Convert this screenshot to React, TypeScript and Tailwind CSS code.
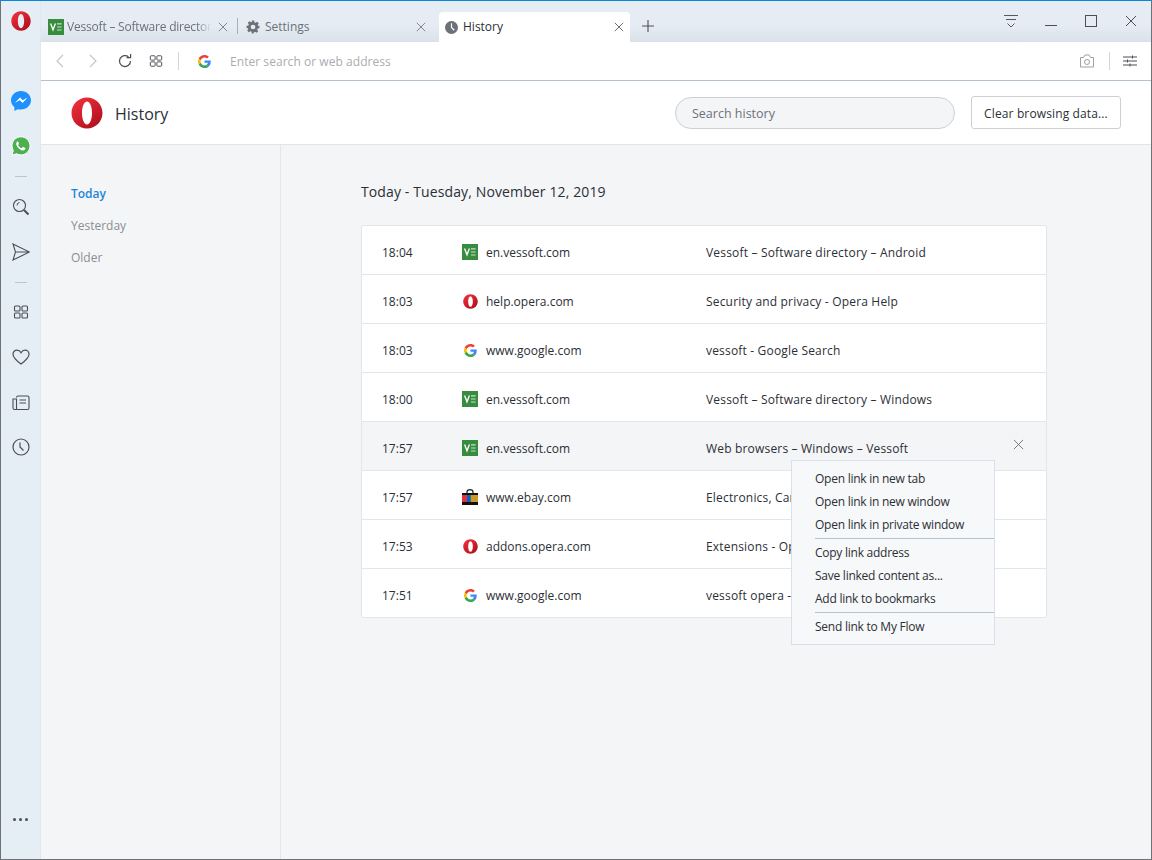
import React from "react";

const font = { fontFamily: '"Open Sans", "Noto Sans", sans-serif' };

function OperaLogo({ size, className = "" }: { size: number; className?: string }) {
  return (
    <svg width={size} height={size} viewBox="0 0 32 32" className={className}>
      <defs>
        <linearGradient id="opg" x1="0" y1="0" x2="0.8" y2="1">
          <stop offset="0" stopColor="#f5343f" />
          <stop offset="1" stopColor="#b00f1c" />
        </linearGradient>
      </defs>
      <path
        fillRule="evenodd"
        fill="url(#opg)"
        d="M16 0.500C7.400 0.500 0.500 7.400 0.500 16S7.400 31.500 16 31.500 31.500 24.600 31.500 16 24.600 0.500 16 0.500ZM16 4.600c3 0 5 5.200 5 11.400s-2 11.400-5 11.400S11 22.200 11 16 13 4.600 16 4.600Z"
      />
    </svg>
  );
}

function Ve({ className = "" }: { className?: string }) {
  return (
    <svg width="16" height="16" viewBox="0 0 16 16" className={className}>
      <rect width="16" height="16" fill="#368d3e" />
      <path d="M2.600 4.400 L5 10.800 L7.400 4.400" fill="none" stroke="#fff" strokeWidth="1.300" />
      <path d="M9 4.800H13.600M9 8H13.600M9 11H13.600" stroke="#c9dfcb" strokeWidth="1.200" />
    </svg>
  );
}

function GoogleG({ size = 14 }: { size?: number }) {
  return (
    <svg width={size} height={size} viewBox="0 0 48 48">
      <path fill="#EA4335" d="M24 9.500c3.500 0 6.700 1.200 9.200 3.600l6.900-6.900C35.900 2.400 30.500 0 24 0 14.600 0 6.500 5.400 2.600 13.200l8 6.200C12.400 13.700 17.700 9.500 24 9.500z" />
      <path fill="#4285F4" d="M46.900 24.500c0-1.600-.1-3.100-.4-4.500H24v9h12.900c-.6 3-2.200 5.500-4.700 7.200l7.700 6C44.400 37.800 46.900 31.700 46.900 24.500z" />
      <path fill="#FBBC05" d="M10.500 28.600c-.5-1.400-.8-3-.8-4.600s.3-3.200.8-4.600l-8-6.200C.9 16.500 0 20.100 0 24s.9 7.500 2.600 10.800l7.900-6.200z" />
      <path fill="#34A853" d="M24 48c6.500 0 11.900-2.100 15.900-5.800l-7.700-6c-2.200 1.400-4.900 2.300-8.200 2.300-6.300 0-11.600-4.200-13.500-9.900l-8 6.200C6.500 42.600 14.600 48 24 48z" />
    </svg>
  );
}

function Ebay() {
  return (
    <svg width="16" height="16" viewBox="0 0 16 16">
      <path d="M5 5V3a3 2.400 0 0 1 6 0V5" fill="none" stroke="#222" strokeWidth="1.200" />
      <rect y="4" width="16" height="12" fill="#111" />
      <rect y="6" width="5" height="7" fill="#e53238" />
      <rect x="5" y="6" width="3.500" height="7" fill="#0064d2" />
      <rect x="8.500" y="6" width="7.500" height="7" fill="#c69a2b" />
    </svg>
  );
}

function Cross({ size, color, w = 1 }: { size: number; color: string; w?: number }) {
  return (
    <svg width={size} height={size} viewBox="0 0 12 12" fill="none" stroke={color} strokeWidth={w}>
      <path d="M1 1 11 11M11 1 1 11" />
    </svg>
  );
}

function Grid({ size = 16, color = "#4b4f54" }: { size?: number; color?: string }) {
  return (
    <svg width={size} height={size} viewBox="0 0 16 16" fill="none" stroke={color} strokeWidth="1.100">
      <rect x="1.500" y="2" width="5.500" height="5" rx="1" />
      <rect x="9" y="2" width="5.500" height="5" rx="1" />
      <rect x="1.500" y="9" width="5.500" height="5" rx="1" />
      <rect x="9" y="9" width="5.500" height="5" rx="1" />
    </svg>
  );
}

const rows = [
  { t: "18:04", i: "v", d: "en.vessoft.com", n: "Vessoft – Software directory – Android" },
  { t: "18:03", i: "o", d: "help.opera.com", n: "Security and privacy - Opera Help" },
  { t: "18:03", i: "g", d: "www.google.com", n: "vessoft - Google Search" },
  { t: "18:00", i: "v", d: "en.vessoft.com", n: "Vessoft – Software directory – Windows" },
  { t: "17:57", i: "v", d: "en.vessoft.com", n: "Web browsers – Windows – Vessoft", hover: true },
  { t: "17:57", i: "e", d: "www.ebay.com", n: "Electronics, Cars, Fashion, Collectibles" },
  { t: "17:53", i: "o", d: "addons.opera.com", n: "Extensions - Opera add-ons" },
  { t: "17:51", i: "g", d: "www.google.com", n: "vessoft opera - Google Search" },
];

function RowIcon({ k }: { k: string }) {
  if (k === "v") return <Ve />;
  if (k === "o") return <OperaLogo size={15} />;
  if (k === "g") return <GoogleG size={13} />;
  return <Ebay />;
}

function MenuItem({ children }: { children: React.ReactNode }) {
  return <div className="h-[23px] pl-[23px] flex items-center text-[12px] tracking-[-0.25px] text-[#2b2f36]">{children}</div>;
}

export default function App() {
  return (
    <div
      style={font}
      className="w-[1152px] h-[860px] flex border-t border-t-[#0b86d6] border-l border-r border-b border-l-[#6e7276] border-r-[#6e7276] border-b-[#6e7276] bg-[#f4f5f7] overflow-hidden"
    >
      {/* Sidebar */}
      <aside className="w-[40px] shrink-0 bg-[#e5edf5] border-r border-r-[#dfe7f0] flex flex-col items-center">
        <OperaLogo size={20} className="mt-[10px]" />
        <div className="mt-[60px] flex flex-col items-center">
          <svg width="20" height="20" viewBox="0 0 20 20">
            <path fill="#1e90ff" d="M10 0C4.500 0 0 4.100 0 9.300c0 2.800 1.300 5.200 3.400 6.800V20l3.300-1.800c1 .3 2.100.4 3.300.4 5.500 0 10-4.100 10-9.300S15.500 0 10 0Z" />
            <path fill="#fff" d="M3.800 11.900 9 6.600l2.700 2.700 5-2.700-5.200 5.300-2.700-2.700Z" />
          </svg>
          <svg width="20" height="20" viewBox="0 0 20 20" className="mt-[25px]">
            <path fill="#4caf50" stroke="#fff" strokeWidth="1" d="M10 .8C5 .8 1 4.800 1 9.800c0 1.700.5 3.300 1.300 4.700L1 19l4.700-1.200c1.300.7 2.800 1.100 4.300 1.100 5 0 9-4 9-9s-4-9.100-9-9.100Z" />
            <path fill="#fff" d="M7 5.500c-.3 0-.8.100-1.100.5-.9 1-.9 2.700.3 4.400 1.300 1.900 3.100 3.500 5.400 4 1.200.2 2.400-.5 2.700-1.400.2-.6.100-1 0-1.100l-2.100-1c-.2-.1-.4 0-.5.100l-.8 1c-.2.200-.3.200-.5.100-1.400-.6-2.500-1.600-3.200-2.900-.1-.2 0-.3.100-.5l.6-.8c.1-.1.100-.3 0-.5l-.9-2c-.1-.3-.3-.4-.5-.4Z" />
          </svg>
          <div className="w-[12px] h-px bg-[#b9c5d1] mt-[20px]" />
          <svg width="18" height="18" viewBox="0 0 18 18" fill="none" stroke="#4b4f54" strokeWidth="1.100" className="mt-[21px]">
            <circle cx="7.500" cy="7.500" r="6" />
            <path d="M12 12 16.500 16.500" strokeWidth="2" />
            <path d="M7.500 4.500A3 3 0 0 0 5 7.500" strokeWidth="1" />
          </svg>
          <svg width="18" height="18" viewBox="0 0 18 18" fill="none" stroke="#4b4f54" strokeWidth="1.100" className="mt-[27px]">
            <path d="M1 1 17.500 9 1 17 3.500 9ZM3.500 9H17.500" />
          </svg>
          <div className="w-[12px] h-px bg-[#b9c5d1] mt-[21px]" />
          <div className="mt-[21px]"><Grid /></div>
          <svg width="18" height="18" viewBox="0 0 18 18" fill="none" stroke="#4b4f54" strokeWidth="1.200" className="mt-[28px]">
            <path d="M9 16C5 13 1 10 1 6.200 1 3.800 2.900 2.200 4.900 2.200 6.600 2.200 8.200 3.200 9 4.700 9.800 3.200 11.400 2.200 13.100 2.200 15.100 2.200 17 3.800 17 6.200 17 10 13 13 9 16Z" />
          </svg>
          <svg width="18" height="16" viewBox="0 0 18 16" fill="none" stroke="#4b4f54" strokeWidth="1.100" className="mt-[29px]">
            <path d="M4.500 2.500C4.500 1.500 5 1 6 1H15.500C16.500 1 17 1.500 17 2.500V13C17 14 16.500 14.500 15.500 14.500H2.500C1.500 14.500 1 14 1 13V4H4.500V14" />
            <path d="M7.500 5H14M7.500 8H14" />
          </svg>
          <svg width="18" height="18" viewBox="0 0 18 18" fill="none" stroke="#4b4f54" strokeWidth="1.200" className="mt-[27px]">
            <circle cx="9" cy="9" r="8" />
            <path d="M8 4.500V9L11.500 12.500" />
          </svg>
        </div>
        <div className="mt-auto mb-[38px] flex gap-[3px]">
          <div className="w-[3px] h-[3px] rounded-full bg-[#4b4f54]" />
          <div className="w-[3px] h-[3px] rounded-full bg-[#4b4f54]" />
          <div className="w-[3px] h-[3px] rounded-full bg-[#4b4f54]" />
        </div>
      </aside>

      <div className="flex-1 min-w-0 flex flex-col">
        {/* Tab bar */}
        <div className="h-[41px] shrink-0 flex bg-gradient-to-b from-[#e5ecf4] from-60% to-[#dbe1e9] text-[12px] text-[#6c7077] pl-[5px]">
          <div className="w-[192px] h-[29px] mt-[11px] flex items-center pl-[2px] relative">
            <Ve className="shrink-0" />
            <span className="ml-[3px] w-[144px] overflow-hidden whitespace-nowrap tracking-[-0.2px] [mask-image:linear-gradient(to_right,black_90%,transparent)]">Vessoft – Software directory</span>
            <span className="ml-[7px]"><Cross size={10} color="#6c7077" /></span>
            <div className="absolute right-0 top-[6px] h-[16px] w-px bg-[#a9b0b8]" />
          </div>
          <div className="w-[201px] h-[29px] mt-[11px] flex items-center pl-[8px] relative">
            <svg width="14" height="14" viewBox="0 0 24 24" fill="#6c7077" className="shrink-0">
              <path fillRule="evenodd" d="M10 1h4l.6 3.100 1.900.8 2.600-1.800 2.800 2.800-1.800 2.600.8 1.900L23 10v4l-3.100.6-.8 1.900 1.800 2.600-2.800 2.800-2.600-1.800-1.900.8L13 23h-3l-.6-3.100-1.900-.8-2.600 1.800-2.800-2.800 1.800-2.600-.8-1.900L1 14v-4l3.100-.6.800-1.900L3.100 4.900l2.800-2.800 2.600 1.800 1.900-.8ZM12 8a4 4 0 1 0 0 8 4 4 0 0 0 0-8Z" />
            </svg>
            <span className="ml-[5px] flex-1">Settings</span>
            <span className="mr-[13px]"><Cross size={10} color="#6c7077" /></span>
          </div>
          <div className="w-[191px] h-[30px] mt-[11px] flex items-center pl-[6px] bg-white rounded-t-[4px] text-[#2b2f36] relative">
            <svg width="13" height="13" viewBox="0 0 14 14" className="shrink-0">
              <circle cx="7" cy="7" r="7" fill="#6c7077" />
              <path d="M7 2.500V7L10 10" stroke="#fff" strokeWidth="1.300" fill="none" />
            </svg>
            <span className="ml-[5px] flex-1">History</span>
            <span className="mr-[6px]"><Cross size={10} color="#4b4f54" /></span>
          </div>
          <div className="ml-[12px] mt-[19px]">
            <svg width="12" height="12" viewBox="0 0 12 12" stroke="#4b4f54" strokeWidth="1.100"><path d="M6 0V12M0 6H12" /></svg>
          </div>
          <div className="ml-auto flex mt-[14px] items-start">
            <svg width="14" height="13" viewBox="0 0 14 13" fill="none" stroke="#55595e" strokeWidth="1">
              <path d="M0 .5H14M2 4.500H12M3.500 8.500 7 12 10.500 8.500" />
            </svg>
            <svg width="12" height="12" viewBox="0 0 12 12" stroke="#4b4f54" strokeWidth="1" className="ml-[27px]"><path d="M0 10.500H12" /></svg>
            <svg width="12" height="12" viewBox="0 0 12 12" fill="none" stroke="#4b4f54" strokeWidth="1" className="ml-[28px]"><rect x=".5" y=".5" width="11" height="11" /></svg>
            <span className="ml-[28px] mr-[14px]"><Cross size={12} color="#4b4f54" /></span>
          </div>
        </div>

        {/* Toolbar */}
        <div className="h-[39px] shrink-0 bg-white border-b border-b-[#b4c1cc] flex items-center">
          <svg width="10" height="14" viewBox="0 0 10 14" fill="none" stroke="#c3c7cc" strokeWidth="1.200" className="ml-[14px]"><path d="M8 1 2 7 8 13" /></svg>
          <svg width="10" height="14" viewBox="0 0 10 14" fill="none" stroke="#c3c7cc" strokeWidth="1.200" className="ml-[23px]"><path d="M2 1 8 7 2 13" /></svg>
          <svg width="14" height="14" viewBox="0 0 14 14" fill="none" stroke="#4b4f54" strokeWidth="1.200" className="ml-[20px]">
            <path d="M12.500 7A5.500 5.500 0 1 1 10.500 2.800" />
            <path d="M8.500 3.600H12.600V0" />
          </svg>
          <div className="ml-[17px]"><Grid size={14} /></div>
          <div className="w-px h-[18px] bg-[#d2d6da] ml-[15px]" />
          <div className="ml-[19px]"><GoogleG size={13} /></div>
          <span className="ml-[19px] pt-px text-[12px] text-[#a9adb2] tracking-[0.05px]">Enter search or web address</span>
          <svg width="16" height="14" viewBox="0 0 16 14" fill="none" stroke="#9ba1a7" strokeWidth="1" className="ml-auto">
            <path d="M1.500 3.500H4.500L6 1H10L11.500 3.500H14.500V13H1.500Z" />
            <circle cx="8" cy="8" r="2.500" />
          </svg>
          <div className="w-px h-[18px] bg-[#d2d6da] ml-[14px]" />
          <svg width="14" height="12" viewBox="0 0 14 12" stroke="#4b4f54" strokeWidth="1" className="ml-[13px] mr-[14px]">
            <path d="M0 2H14M0 6H14M0 10H14M9.500 .5V3.500M4.500 4.500V7.500M7 8.500V11.500" />
          </svg>
        </div>

        {/* Page header */}
        <div className="h-[64px] shrink-0 bg-white border-b border-b-[#e2e4e8] flex items-center">
          <OperaLogo size={32} className="ml-[30px]" />
          <h1 className="ml-[12px] pt-[2px] text-[16px] text-[#2b2f36] font-normal">History</h1>
          <div className="ml-auto w-[280px] h-[32px] rounded-full bg-[#f4f5f7] border border-[#ccd0d6] flex items-center pl-[16px] pt-[4px] text-[12.500px] text-[#6e7277]">
            Search history
          </div>
          <div className="ml-[16px] mr-[30px] w-[150px] h-[33px] rounded-[3px] bg-white border border-[#ccd0d6] flex items-center justify-center pt-[2px] text-[12px] tracking-[0.13px] text-[#2b2f36]">
            Clear browsing data...
          </div>
        </div>

        {/* Body */}
        <div className="flex-1 min-h-0 flex">
          <nav className="w-[240px] shrink-0 border-r border-r-[#e4e6ea] pl-[30px] pt-[40px] text-[12px] flex flex-col gap-[15px]">
            <span className="text-[#1e86d8] font-semibold h-[17px] leading-[17px]">Today</span>
            <span className="text-[#8a8e93] h-[17px] leading-[17px]">Yesterday</span>
            <span className="text-[#8a8e93] h-[17px] leading-[17px]">Older</span>
          </nav>
          <main className="flex-1 min-w-0 pl-[80px] pt-[37px] relative">
            <h2 className="text-[14px] font-medium leading-[20px] tracking-[0.12px] text-[#2b2f36]">Today - Tuesday, November 12, 2019</h2>
            <div className="mt-[23px] w-[686px] bg-white border border-[#e3e5e9] rounded-[3px]">
              {rows.map((r, idx) => (
                <div
                  key={idx}
                  className={`flex items-center pt-[4px] text-[12px] text-[#2b2f36] ${idx ? "h-[49px] border-t border-t-[#e3e5e9]" : "h-[48px]"} ${r.hover ? "bg-[#f4f5f7]" : ""}`}
                >
                  <span className="w-[100px] pl-[20px] pt-[2px] shrink-0">{r.t}</span>
                  <span className="w-[16px] flex justify-center shrink-0"><RowIcon k={r.i} /></span>
                  <span className="ml-[8px] pt-[2px] w-[220px] shrink-0">{r.d}</span>
                  <span className="whitespace-nowrap pt-[2px] overflow-hidden tracking-[0.18px]">{r.n}</span>
                  {r.hover && (
                    <span className="ml-auto mr-[22px] mb-[7px]"><Cross size={11} color="#6c7077" /></span>
                  )}
                </div>
              ))}
            </div>
            {/* Context menu */}
            <div className="absolute left-[510px] top-[315px] w-[204px] h-[185px] bg-[#f7f8f9] border border-[#d8e0ea] flex flex-col pt-[6px]">
              <MenuItem>Open link in new tab</MenuItem>
              <MenuItem>Open link in new window</MenuItem>
              <MenuItem>Open link in private window</MenuItem>
              <div className="ml-[23px] h-px bg-[#b4c1d2] my-[2px]" />
              <MenuItem>Copy link address</MenuItem>
              <MenuItem>Save linked content as...</MenuItem>
              <MenuItem>Add link to bookmarks</MenuItem>
              <div className="ml-[23px] h-px bg-[#b4c1d2] my-[2px]" />
              <MenuItem>Send link to My Flow</MenuItem>
            </div>
          </main>
        </div>
      </div>
    </div>
  );
}
